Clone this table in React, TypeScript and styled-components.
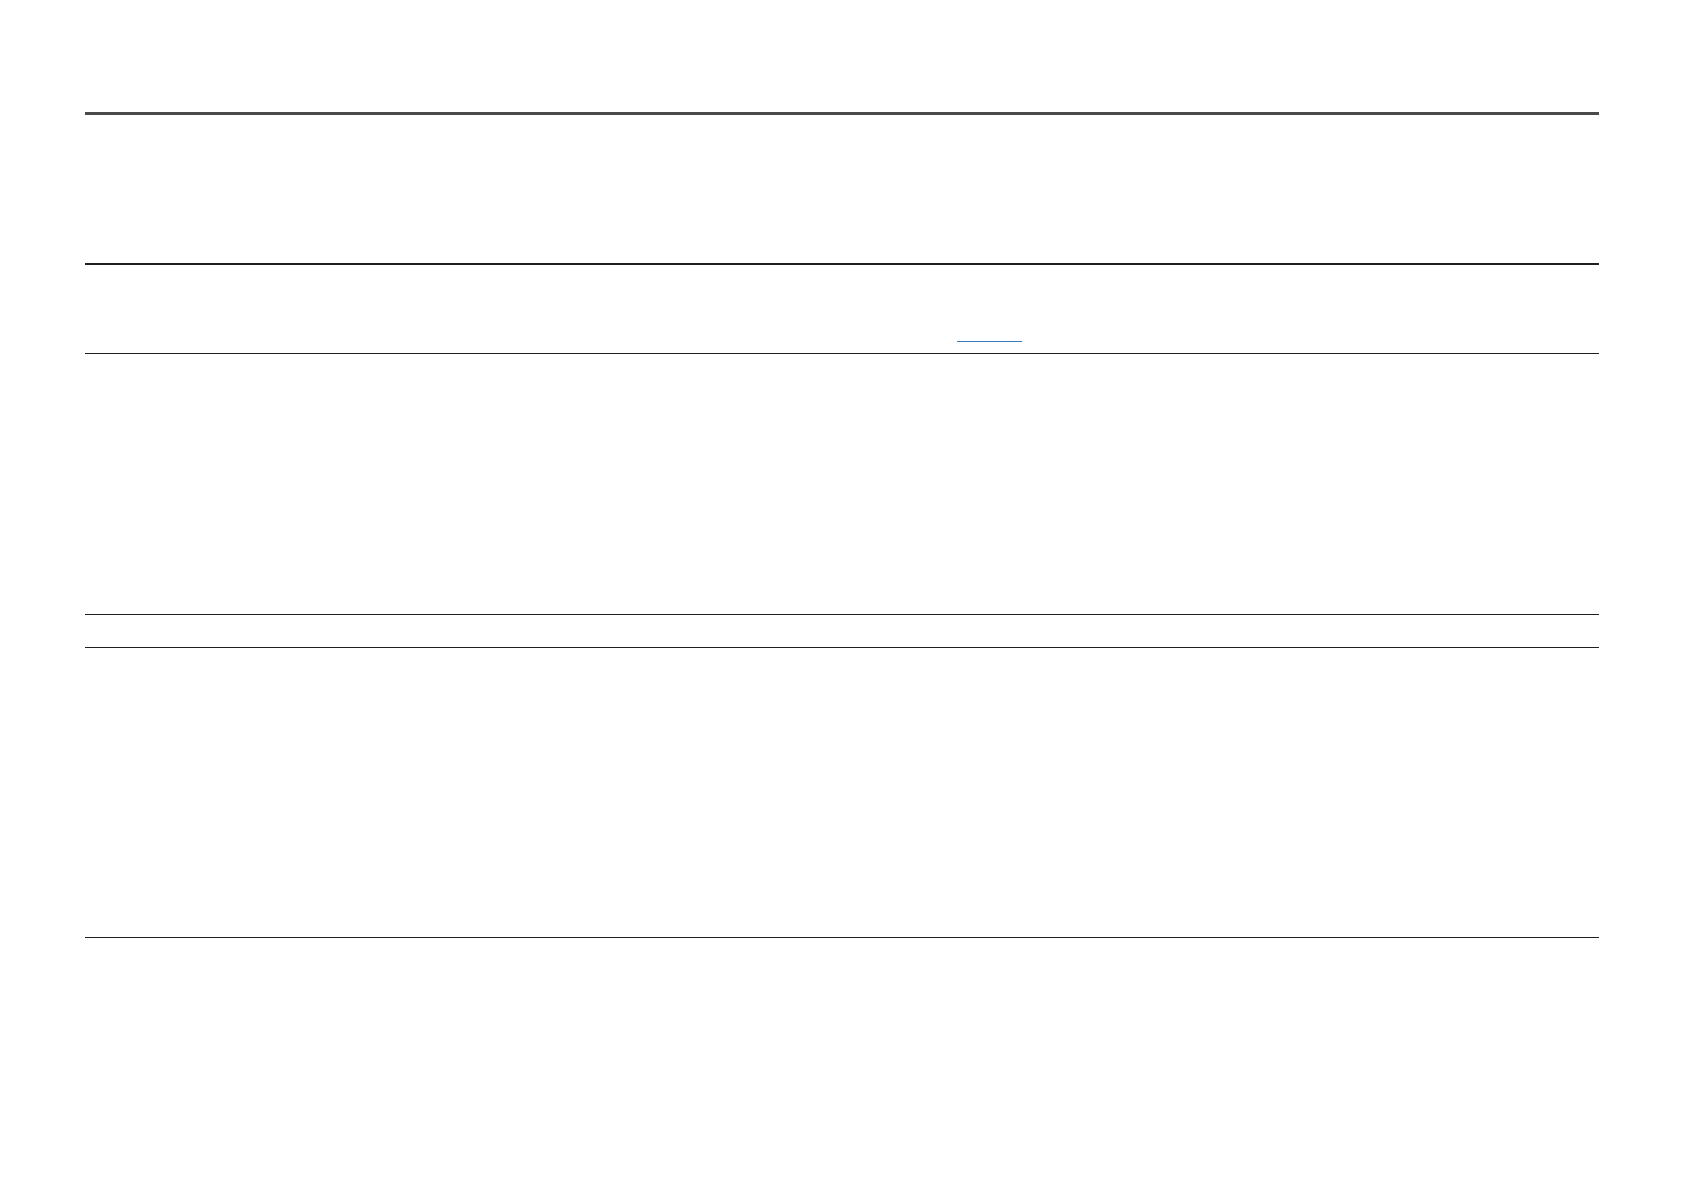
import React from "react";
import styled, { createGlobalStyle } from "styled-components";

const Global = createGlobalStyle`
  html, body { margin: 0; padding: 0; background: #ffffff; }
  body { font-family: "Liberation Sans", Arial, sans-serif; }
`;

const Page = styled.div`
  width: 1684px;
  height: 1191px;
  background: #ffffff;
  padding: 112px 0 0 85px;
  box-sizing: border-box;
`;

const Sheet = styled.div`
  width: 1514px;
  display: flex;
  flex-direction: column;
`;

const TopRule = styled.div`
  height: 3px;
  background: #4a4a4a;
`;

const Row = styled.div<{ $h: number; $rule: number }>`
  height: ${(p) => p.$h}px;
  border-bottom: ${(p) => p.$rule}px solid #231f20;
  display: flex;
  align-items: flex-end;
`;

const LinkCell = styled.div`
  padding: 0 0 11px 872px;
  display: flex;
`;

const Link = styled.a`
  display: block;
  width: 65px;
  height: 0;
  border-bottom: 1px solid #3d7cc0;
`;

export default function App() {
  return (
    <>
      <Global />
      <Page>
        <Sheet>
          <TopRule />
          <Row $h={148} $rule={2} />
          <Row $h={88} $rule={1}>
            <LinkCell>
              <Link />
            </LinkCell>
          </Row>
          <Row $h={260} $rule={1} />
          <Row $h={32} $rule={1} />
          <Row $h={289} $rule={1} />
        </Sheet>
      </Page>
    </>
  );
}
